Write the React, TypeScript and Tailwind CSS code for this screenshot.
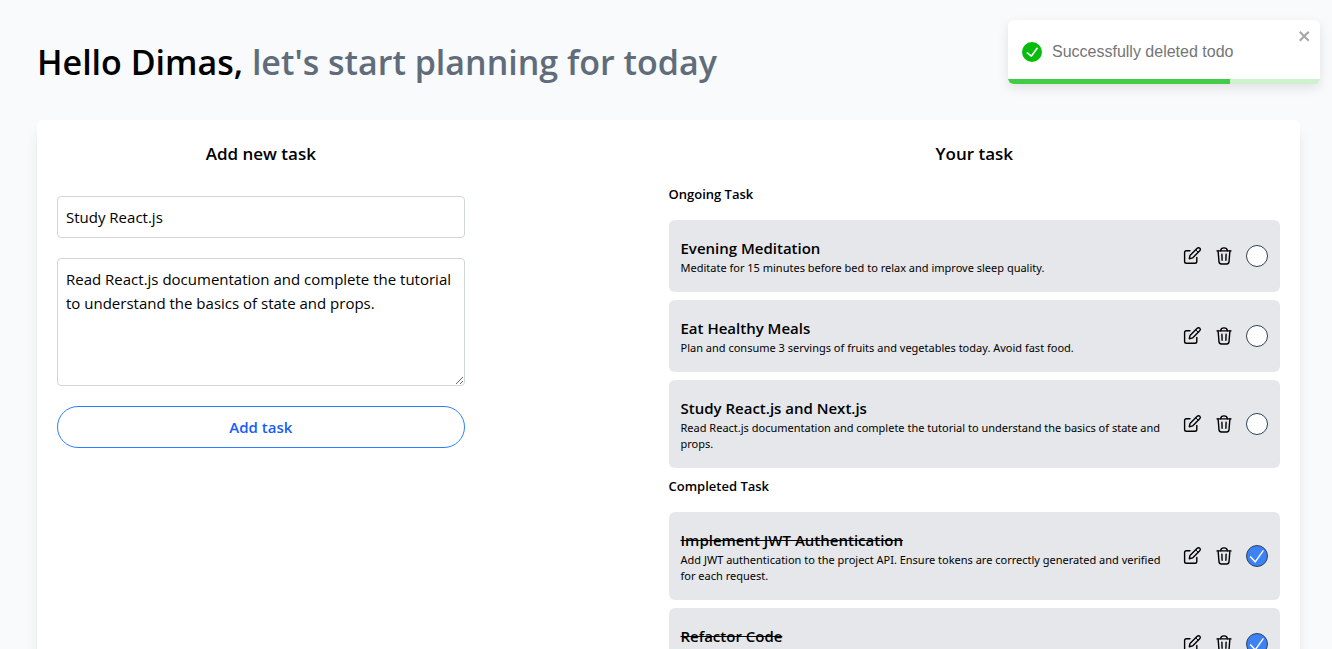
import { useState } from "react";

type Task = { id: number; title: string; description: string; done: boolean };

const initialTasks: Task[] = [
  { id: 1, title: "Evening Meditation", description: "Meditate for 15 minutes before bed to relax and improve sleep quality.", done: false },
  { id: 2, title: "Eat Healthy Meals", description: "Plan and consume 3 servings of fruits and vegetables today. Avoid fast food.", done: false },
  { id: 3, title: "Study React.js and Next.js", description: "Read React.js documentation and complete the tutorial to understand the basics of state and props.", done: false },
  { id: 4, title: "Implement JWT Authentication", description: "Add JWT authentication to the project API. Ensure tokens are correctly generated and verified for each request.", done: true },
  { id: 5, title: "Refactor Code", description: "", done: true },
];

function EditIcon() {
  return (
    <svg viewBox="0 0 20 20" className="size-5" fill="none" stroke="currentColor" strokeWidth="1.4" strokeLinecap="round" strokeLinejoin="round" aria-hidden="true">
      <path d="M8 4.7H4.4C3.2 4.7 2.6 5.3 2.6 6.5V15.5C2.6 16.7 3.2 17.3 4.4 17.3H13C14.2 17.3 14.8 16.7 14.8 15.5V11.4" />
      <path d="M7.3 12.7L8 9.4L15.2 2.3C16 1.5 17.1 1.6 17.8 2.3C18.5 3 18.5 4 17.7 4.8L10.6 11.9L7.3 12.7Z" />
      <path d="M13.8 3.9L16.1 6.2" strokeWidth="1" />
    </svg>
  );
}

function TrashIcon() {
  return (
    <svg viewBox="0 0 20 20" className="size-5" fill="none" stroke="currentColor" strokeWidth="1.4" strokeLinecap="round" strokeLinejoin="round" aria-hidden="true">
      <path d="M3 4.9H17" />
      <path d="M6.6 4.7C6.8 2.8 7.8 1.9 10 1.9C12.2 1.9 13.2 2.8 13.4 4.7" />
      <path d="M4.1 5L5 15.6C5.1 17.2 5.9 18 7.4 18H12.6C14.1 18 14.9 17.2 15 15.6L15.9 5" />
      <path d="M7.9 8.2L8.1 14.2M12.1 8.2L11.9 14.2" />
    </svg>
  );
}

function TaskCard({ task, onToggle, onDelete }: { task: Task; onToggle: () => void; onDelete: () => void }) {
  return (
    <li className="flex items-center gap-2 rounded-md bg-gray-200 px-3 py-4">
      <div className="min-w-0 flex-1">
        <h4 className={task.done ? "text-[15px] leading-6 font-semibold line-through" : "text-[15px] leading-6 font-semibold"}>{task.title}</h4>
        <p className="min-h-4 font-['Noto_Sans',sans-serif] text-[11px] leading-4">{task.description}</p>
      </div>
      <div className="flex shrink-0 items-center gap-3">
        <button type="button" aria-label="Edit task"><EditIcon /></button>
        <button type="button" aria-label="Delete task" onClick={onDelete}><TrashIcon /></button>
        <label className="relative flex size-[22px] items-center justify-center">
          <input
            type="checkbox"
            aria-label="Completed"
            checked={task.done}
            onChange={onToggle}
            className="size-full appearance-none rounded-full border border-slate-700 bg-white checked:bg-[#3b82f6]"
          />
          {task.done && (
            <svg viewBox="0 0 22 22" className="pointer-events-none absolute inset-0" fill="none" stroke="white" strokeWidth="1.4" aria-hidden="true">
              <path d="M4.2 11.6L9.2 16.8L17.4 5.4" />
            </svg>
          )}
        </label>
      </div>
    </li>
  );
}

function Toast({ onClose }: { onClose: () => void }) {
  return (
    <div role="status" className="absolute top-5 right-3 flex h-16 w-[312px] items-center gap-[10px] overflow-hidden rounded-md bg-white px-[14px] font-['Liberation_Sans',Arial,sans-serif] text-[#757575] shadow-[0_4px_12px_rgba(0,0,0,0.1)]">
      <svg viewBox="0 0 24 24" className="size-5 shrink-0" fill="#07bc0c" aria-hidden="true">
        <path d="M12 0a12 12 0 1012 12A12.014 12.014 0 0012 0zm6.927 8.2l-6.845 9.289a1.011 1.011 0 01-1.43.188l-4.888-3.908a1 1 0 111.25-1.562l4.076 3.261 6.227-8.451a1 1 0 111.61 1.183z" />
      </svg>
      <span className="text-base leading-6">Successfully deleted todo</span>
      <button type="button" aria-label="Close" onClick={onClose} className="absolute top-2 right-2 text-black/35">
        <svg viewBox="0 0 14 16" className="h-4 w-[14px]" fill="currentColor" aria-hidden="true">
          <path fillRule="evenodd" d="M7.71 8.23l3.75 3.75-1.48 1.48-3.75-3.75-3.75 3.75L1 11.98l3.75-3.75L1 4.48 2.48 3l3.75 3.75L9.98 3l1.48 1.48-3.75 3.75z" />
        </svg>
      </button>
      <div className="absolute inset-x-0 bottom-0 h-[5px] bg-[#07bc0c]/20">
        <div className="h-full w-[71%] bg-[#07bc0c]/70" />
      </div>
    </div>
  );
}

export default function App() {
  const [tasks, setTasks] = useState(initialTasks);
  const [title, setTitle] = useState("Study React.js");
  const [description, setDescription] = useState("Read React.js documentation and complete the tutorial to understand the basics of state and props.");
  const [toast, setToast] = useState(true);

  const addTask = () => setTasks([...tasks, { id: Date.now(), title, description, done: false }]);
  const toggle = (id: number) => setTasks(tasks.map((t) => (t.id === id ? { ...t, done: !t.done } : t)));
  const remove = (id: number) => {
    setTasks(tasks.filter((t) => t.id !== id));
    setToast(true);
  };
  const renderList = (done: boolean) => (
    <ul className="mt-4 flex flex-col gap-2">
      {tasks.filter((t) => t.done === done).map((t) => (
        <TaskCard key={t.id} task={t} onToggle={() => toggle(t.id)} onDelete={() => remove(t.id)} />
      ))}
    </ul>
  );

  return (
    <div className="relative min-h-screen bg-[#f8fafc] pt-10 pr-8 pb-10 pl-[37px] font-['Open_Sans','Noto_Sans',sans-serif] text-black">
      <h1 className="text-[34px] leading-11 font-semibold">
        Hello Dimas, <span className="text-[#616c7a]">let's start planning for today</span>
      </h1>

      <main className="mt-9 grid grid-cols-2 rounded-md bg-white p-5 shadow-lg">
        <section className="w-2/3">
          <h2 className="text-center text-[17px] leading-7 font-semibold">Add new task</h2>
          <form
            className="mt-7 flex flex-col gap-5"
            onSubmit={(e) => {
              e.preventDefault();
              addTask();
            }}
          >
            <input
              aria-label="Task title"
              value={title}
              onChange={(e) => setTitle(e.target.value)}
              className="w-full rounded-sm border border-gray-300 p-2 text-[15px] leading-6 outline-none"
            />
            <textarea
              aria-label="Task description"
              value={description}
              onChange={(e) => setDescription(e.target.value)}
              className="h-32 w-full rounded-sm border border-gray-300 p-2 text-[15px] leading-6 outline-none"
            />
            <button type="submit" className="w-full rounded-full border border-blue-500 p-2 text-[15px] leading-6 font-semibold text-blue-600">
              Add task
            </button>
          </form>
        </section>

        <section>
          <h2 className="text-center text-[17px] leading-7 font-semibold">Your task</h2>
          <h3 className="mt-4 text-[13px] leading-5 font-semibold">Ongoing Task</h3>
          {renderList(false)}
          <h3 className="mt-2 text-[13px] leading-5 font-semibold">Completed Task</h3>
          {renderList(true)}
        </section>
      </main>

      {toast && <Toast onClose={() => setToast(false)} />}
    </div>
  );
}
